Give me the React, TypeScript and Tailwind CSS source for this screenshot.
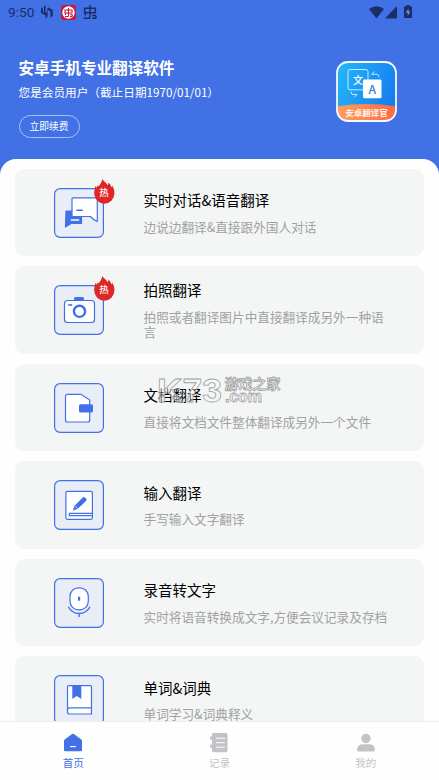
import type { ReactNode } from "react";

const BLUE = "#4171e5";

function ChatIcon() {
  return (
    <>
      <path d="M12 23h15.500v12.500H17l-5.500 3.500z" fill={BLUE} stroke={BLUE} strokeLinejoin="round" />
      <path d="M19 9.800h23.300q1 0 1 1V33.500q-3.500-1-7-5H19q-1 0-1-1V10.800q0-1 1-1z" fill="#fff" strokeLinejoin="round" />
      <path d="M22.300 22.300h6.500" strokeWidth="1.500" />
      <path d="M17.500 32h7" stroke="#fff" strokeWidth="1.700" strokeLinecap="round" />
    </>
  );
}

function CameraIcon() {
  return (
    <>
      <path d="M20 15v-1.500q0-1.500 1.500-1.500h7q1.500 0 1.500 1.500V15z" fill={BLUE} stroke="none" />
      <rect x="10.500" y="15.500" width="30" height="22" rx="3" fill="#fff" />
      <circle cx="25.500" cy="26.300" r="5.600" strokeWidth="2.400" />
      <path d="M14.200 20h4" strokeWidth="1.600" />
    </>
  );
}

function DocumentIcon() {
  return (
    <>
      <path d="M13.500 11.300H27l8.700 5.700v20q0 2-2 2H13.500q-2 0-2-2V13.300q0-2 2-2z" fill="#fff" />
      <rect x="25" y="21.200" width="14" height="8.300" rx="1.500" fill={BLUE} stroke="none" />
    </>
  );
}

function WriteIcon() {
  return (
    <>
      <rect x="11.900" y="11.300" width="26.500" height="28" rx="1.500" fill="#fff" />
      <path d="M38.400 33.300h-23v2.400h23" />
      <path d="M28.700 17.600q1.200-1.100 2.300 0l1 1q1.100 1.200 0 2.300L23.600 29l-4.700 1.600 1.400-4.600z" fill={BLUE} stroke="none" />
      <path d="M21 25.900l2.900 2.900" stroke="#fff" strokeWidth=".6" />
    </>
  );
}

function MicIcon() {
  return (
    <>
      <rect x="16" y="9.800" width="18.300" height="22" rx="8.500" fill="#fff" />
      <path d="M14.300 28.700C19 37.700 31.300 37.700 36 28.700M25.100 35.500V39" strokeWidth="1.400" />
      <path d="M25.100 18.700v4" strokeWidth="2.200" />
    </>
  );
}

function BookIcon() {
  return (
    <>
      <path d="M14.700 10.700h21.500q1.300 0 1.300 1.300v27H15.500q-2 0-2-2V12q0-1.300 1.200-1.300z" fill="#fff" />
      <path d="M37.500 32.800H15.500q-2 0-2 2.500" />
      <path d="M18.300 10.500h9V24l-4.500-3-4.500 3z" fill={BLUE} stroke="none" />
    </>
  );
}

const features: { title: string; desc: string; icon: ReactNode; hot?: boolean }[] = [
  { title: "实时对话&语音翻译", desc: "边说边翻译&直接跟外国人对话", icon: <ChatIcon />, hot: true },
  { title: "拍照翻译", desc: "拍照或者翻译图片中直接翻译成另外一种语言", icon: <CameraIcon />, hot: true },
  { title: "文档翻译", desc: "直接将文档文件整体翻译成另外一个文件", icon: <DocumentIcon /> },
  { title: "输入翻译", desc: "手写输入文字翻译", icon: <WriteIcon /> },
  { title: "录音转文字", desc: "实时将语音转换成文字,方便会议记录及存档", icon: <MicIcon /> },
  { title: "单词&词典", desc: "单词学习&词典释义", icon: <BookIcon /> },
];

function HotBadge() {
  return (
    <div className="absolute -top-[9px] left-[39.500px] h-[25px] w-[21px]">
      <svg viewBox="0 0 21 25" className="h-full w-full">
        <path
          d="M8.300 0c1 2.300 4.500 3.500 5.200 6.200.8-.6 1-1.400.8-2.700 2 1.500 2.700 3 2.800 4.700.7-.4 1-1 .9-1.800 1.800 2 2.500 5 2.400 8.200A10.100 10.100 0 0 1 .2 14.600C.2 11.800.7 9.800 1.400 7c.5.400 1 .9 1.200 1.700.6-.7.800-1.400.9-2.400.5.300.8.700 1 1.200C6 5.500 7.800 3 8.300 0z"
          fill="#df2626"
        />
      </svg>
      <span className="absolute inset-x-0 top-[6px] text-center text-[9.500px] leading-[14px] font-medium text-white">热</span>
    </div>
  );
}

function FeatureCard({ title, desc, icon, hot }: { title: string; desc: string; icon: ReactNode; hot?: boolean }) {
  return (
    <div className="flex h-[87.500px] shrink-0 items-center rounded-[9px] bg-[#f4f6f6] pr-8 pl-[39px]">
      <div className="relative h-[50px] w-[50px] shrink-0">
        <svg viewBox="0 0 50 50" className="h-full w-full" fill="none" stroke={BLUE} strokeWidth="1.200">
          <rect x=".6" y=".6" width="48.800" height="48.800" rx="5.500" fill="#e9eef6" />
          {icon}
        </svg>
        {hot && <HotBadge />}
      </div>
      <div className="ml-[39.500px] min-w-0 pb-[0.500px]">
        <h2 className="text-[14.500px] leading-[17px] text-black">{title}</h2>
        <p className="mt-[10.500px] text-[12.650px] leading-[15px] text-[#a0a1a3]">{desc}</p>
      </div>
    </div>
  );
}

function StatusBar() {
  return (
    <div className="flex h-6 items-center pl-2 text-[#1b2e66]">
      <span className="w-[33px] pt-px font-[Roboto,sans-serif] text-[13.700px] leading-none">9:50</span>
      <svg width="12" height="14" viewBox="0 0 12 14" fill="currentColor">
        <path d="M3 1.500L4.600 0v8L6 7V3.200L6.600 3v8.500L4.600 13.500v-3L0 8V3.500L2 2v5l1 .6zM7 2.300L11.800 5v6L9.500 12.500V6.300L7 5z" />
      </svg>
      <div className="ml-2 flex h-[15px] w-[15px] items-center justify-center rounded-[3px] bg-[#c9173b]">
        <svg width="13" height="13" viewBox="0 0 13 13" fill="none" stroke="#c9173b" strokeWidth="1.100">
          <circle cx="6.500" cy="6.500" r="6.200" fill="#fff" stroke="none" />
          <path d="M3 4h7v3H3zM6.500 2v7.500q0 1-1 1H3M3.500 7v2M8 10.500h2q.7-1 0-1.800H8" />
        </svg>
      </div>
      <svg className="ml-[7px]" width="14" height="15" viewBox="0 0 14 15" fill="none" stroke="currentColor" strokeWidth="1.500">
        <path d="M1.700 3.300h10.600v4.500H1.700zM7 0v11.500Q7 13.300 5 13.300H.5M2.300 7.500v3M9 13.300h3.500q1.300-1.400 0-2.800H9" />
      </svg>
      <svg className="ml-auto" width="15" height="13" viewBox="0 0 15 13" fill="currentColor">
        <path d="M0 3Q7.500-2.500 15 3L7.500 12.500z" />
      </svg>
      <svg className="ml-[1.500px]" width="12" height="13" viewBox="0 0 12 13" fill="currentColor">
        <path d="M12 0v12.500H0z" />
      </svg>
      <svg className="mr-[27px] ml-[7px]" width="8" height="14" viewBox="0 0 8 14">
        <path d="M2.500 0h3v1.300H7q1 0 1 1V12q0 1-1 1H1q-1 0-1-1V2.300q0-1 1-1h1.500z" fill="currentColor" />
        <path d="M4.500 3.500L1.800 7.800h2v3L6.300 6.500H4.500z" fill="#7595df" />
      </svg>
    </div>
  );
}

function AppLogo() {
  return (
    <svg width="61" height="61" viewBox="0 0 61 61" className="shrink-0">
      <defs>
        <linearGradient id="logoBlue" x1="0" y1="0.2" x2="1" y2="0.600">
          <stop offset="0" stopColor="#24b6fb" />
          <stop offset="1" stopColor="#147bee" />
        </linearGradient>
        <linearGradient id="logoOrange" x1="0" x2="1">
          <stop offset="0" stopColor="#ffa15d" />
          <stop offset="1" stopColor="#ff6742" />
        </linearGradient>
        <clipPath id="logoClip">
          <rect x="1" y="1" width="59" height="59" rx="11" />
        </clipPath>
      </defs>
      <g clipPath="url(#logoClip)">
        <rect width="61" height="61" fill="url(#logoBlue)" />
        <path d="M0 45.500Q30 40.500 61 45.500V61H0z" fill="url(#logoOrange)" />
      </g>
      <rect x="1" y="1" width="59" height="59" rx="11" fill="none" stroke="#f4faff" strokeWidth="1.800" />
      <rect x="12" y="8.500" width="20" height="20.300" rx="2" fill="none" stroke="#d9f3ff" strokeWidth=".9" />
      <text x="22" y="22.500" textAnchor="middle" fontSize="10" fontWeight="500" fill="#fff">文</text>
      <rect x="27" y="18.500" width="18.500" height="18.700" rx="1.300" fill="#fff" />
      <text x="36.200" y="32.500" textAnchor="middle" fontSize="12" fontWeight="500" fill="#247fdc">A</text>
      <path d="M38.500 10.500l-2.800 2.800h5.500q1.800 0 1.800 3M18.500 36.200l2.500-2.600h-4q-2 0-2-3" fill="none" stroke="#d9f3ff" strokeWidth=".9" />
      <text x="30.500" y="54.500" textAnchor="middle" fontSize="8.500" fontWeight="700" fill="#fff3e8">安卓翻译官</text>
    </svg>
  );
}

function Watermark() {
  return (
    <svg
      className="pointer-events-none absolute top-[374px] left-[155px]"
      width="130"
      height="34"
      viewBox="0 0 130 34"
      fill="#f8f9f9"
      fillOpacity=".4"
      stroke="#a0a1a1"
      strokeWidth=".8"
      fontWeight="700"
    >
      <text x="2" y="27.500" fontSize="33" textLength="65" lengthAdjust="spacingAndGlyphs" fontFamily="Liberation Sans, sans-serif">
        K73
      </text>
      <text x="69.500" y="15" fontSize="14" textLength="56">游戏之家</text>
      <text x="70" y="27.500" fontSize="16" textLength="37" fontFamily="Liberation Sans, sans-serif">.com</text>
    </svg>
  );
}

function TabBar() {
  return (
    <nav className="grid h-[59px] shrink-0 grid-cols-3 border-t border-[#eeeeef] bg-[#fefefe] text-[10.500px] leading-4 text-[#c1c3c6]">
      <div className="flex flex-col items-center pt-[11px] text-[#4171e5]">
        <svg width="20" height="20" viewBox="0 0 20 20">
          <path d="M8.700 1.300q1.300-1 2.600 0l6.700 4.900q1 .8 1 1.800v9q0 1.200-1.200 1.200H2.200Q1 18.200 1 17V8q0-1 1-1.800z" fill="currentColor" />
          <path d="M7 13.600h6" stroke="#fff" strokeWidth="1.100" />
        </svg>
        <span className="mt-[2px]">首页</span>
      </div>
      <div className="flex flex-col items-center pt-[11px]">
        <svg width="20" height="20" viewBox="0 0 20 20" fill="currentColor">
          <rect x="3" y="0" width="15.500" height="19.300" rx="1.500" />
          <rect x="1" y="3.500" width="5" height="3.300" rx="1" />
          <rect x="1" y="11.500" width="5" height="3.300" rx="1" />
          <path d="M7 5.200h9M7 9.700h9M7 14.200h9" stroke="#fff" strokeWidth="1" />
        </svg>
        <span className="mt-[2px]">记录</span>
      </div>
      <div className="flex flex-col items-center pt-[11px]">
        <svg width="20" height="20" viewBox="0 0 20 20" fill="currentColor">
          <circle cx="10" cy="5.500" r="4.700" />
          <path d="M1 16.500Q1.500 11.300 7 11.300h6q5.500 0 6 5.200 0 2-2 2H3q-2 0-2-2z" />
        </svg>
        <span className="mt-[2px]">我的</span>
      </div>
    </nav>
  );
}

export default function App() {
  return (
    <div className="relative flex h-[780px] w-[439px] flex-col overflow-hidden bg-[#4171e5] font-['Noto_Sans_CJK_SC',sans-serif]">
      <StatusBar />
      <header className="flex h-[135px] shrink-0 items-start justify-between pr-[42px] pl-[18.500px]">
        <div className="pt-[32px] text-white">
          <h1 className="text-[15.600px] leading-[23px] font-bold">安卓手机专业翻译软件</h1>
          <p className="mt-[4px] text-[11.650px] leading-[18px]">您是会员用户（截止日期1970/01/01）</p>
          <button className="mt-[14px] flex h-[23px] w-[61px] items-center justify-center rounded-full border border-[#a9c1f7] text-[9.800px]">
            立即续费
          </button>
        </div>
        <div className="pt-[37px]">
          <AppLogo />
        </div>
      </header>
      <main className="flex min-h-0 flex-1 flex-col gap-[10px] overflow-hidden rounded-t-[16px] bg-[#fefefe] px-[15px] pt-[9.750px]">
        {features.map((f) => (
          <FeatureCard key={f.title} {...f} />
        ))}
      </main>
      <TabBar />
      <Watermark />
    </div>
  );
}
